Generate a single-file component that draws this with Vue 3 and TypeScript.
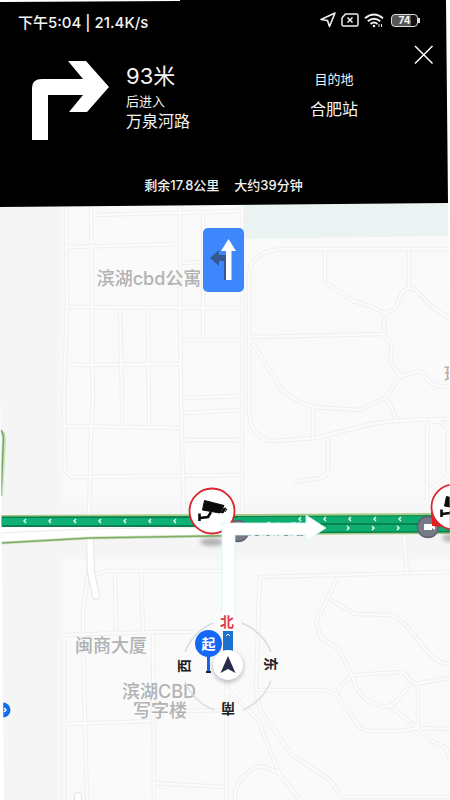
<script setup lang="ts">
import { ref } from 'vue'

interface Chevron {
  x: number
  y: number
  dir: 1 | -1
}

interface PlaceLabel {
  text: string
  x: number
  y: number
}

const navigating = ref(true)

const westbound: Chevron[] = [0, 25, 50, 75, 100, 125, 150, 175].map((x) => ({ x, y: 521, dir: -1 }))
const oppositeLane: Chevron[] = [300, 325, 350, 375, 400].map((x) => ({ x, y: 519, dir: -1 }))
const ownLane: Chevron[] = [348, 373, 398].map((x) => ({ x, y: 528, dir: 1 }))
const chevrons: Chevron[] = [...westbound, ...oppositeLane, ...ownLane]

const labels: PlaceLabel[] = [
  { text: '滨湖cbd公寓', x: 149, y: 285 },
  { text: '闽商大厦', x: 111, y: 652 },
  { text: '滨湖CBD', x: 159, y: 698 },
  { text: '写字楼', x: 160, y: 717 },
  { text: '环', x: 453, y: 381 },
]

const streets: string[] = [
  'M66 200L67 300L64 400L65 470L71 477L242 475',
  'M91 200L92 300L92 350L93 400L91 430L90 480L89 515',
  'M180 200V300L181 400L183 480L184 515',
  'M203 213V338',
  'M92 215L242 211',
  'M67 247L180 244',
  'M181 263L203 262',
  'M68 307L242 308',
  'M67 361L76 365L180 364',
  'M182 340H242',
  'M183 398L242 396',
  'M120 308L122 400V426',
  'M148 308L149 426',
  'M65 426L182 428',
  'M184 413L242 410',
  'M185 440H242',
  'M242 200V515',
  'M450 249H285Q250 250 249 275V410Q250 441 275 441L315 438L372 424Q400 419 450 419',
  'M325 250V282L353 301L370 306L384 313L395 309L403 291Q411 286 417 291L432 307L450 319',
  'M409 250V288',
  'M384 313V334L392 345L390 362L401 376L418 371Q424 372 428 380Q433 387 450 387',
  'M250 337L384 334',
  'M250 339L282 390L297 401L314 407L360 410L385 398L401 376',
  'M387 398L397 421',
  'M313 407V438',
  'M328 438V468Q328 476 320 478L292 482',
  'M427 500V430Q427 420 437 421Q447 424 448 430V475L430 490',
  'M404 535L407 573',
  'M258 620L260 577L450 572',
  'M338 577L316 622L321 638L339 649L352 675L403 672L414 684L450 678',
  'M259 600L256 690L260 710L292 755L330 780L341 797H450',
  'M256 690H325L337 695L360 728Q366 731 372 731H402L418 728L450 729',
  'M331 600L355 614L390 615Q400 618 410 630L430 655Q440 664 450 664',
  'M337 695L340 687L352 675L356 688L366 700L383 707Q393 706 398 700L410 684',
  'M390 706L418 728L430 740L446 748L450 760',
  'M418 684V728',
  'M228 690L258 720L280 775',
  'M235 800Q233 780 258 766Q275 768 283 778L300 800',
  'M227 680L226 800',
  'M64 635V800',
  'M64 635L153 632H224',
  'M90 560L83 610V635L85 723L87 800',
  'M115 572L116 632',
  'M141 572L143 632',
  'M95 574L107 571H225',
  'M153 635L154 800',
  'M65 724L153 721',
  'M185 711L225 710',
  'M154 783L224 787',
]
</script>

<template>
  <main class="nav-screen">
    <header class="panel">
      <div class="status">
        <span class="clock">下午5:04 | 21.4K/s</span>
        <div class="status-icons">
          <svg width="16" height="16" viewBox="0 0 16 16" fill="none" stroke="#eee" stroke-width="1.6" stroke-linejoin="round">
            <path d="M1 7.500L15 1L9.500 14.500L7.500 8.500Z" />
          </svg>
          <svg width="18" height="14" viewBox="0 0 18 14" fill="none" stroke="#eee" stroke-width="1.500" stroke-linejoin="round">
            <path d="M4.500 1H15.500Q17 1 17 2.500V11.500Q17 13 15.500 13H2.500Q1 13 1 11.500V5Z" />
            <path d="M6.500 4.500L11.500 9.500M11.500 4.500L6.500 9.500" />
          </svg>
          <svg width="20" height="15" viewBox="0 0 20 15" fill="none" stroke="#eee" stroke-width="1.900">
            <path d="M1 5.200Q10 -2.200 19 5.200M3.800 8.300Q10 3 16.200 8.300M6.500 11Q10 8 13.500 11" />
            <circle cx="10" cy="13" r="1.300" fill="#eee" stroke="none" />
            <path d="M15 11V14M17.500 11V14" stroke-width="1" />
          </svg>
          <span class="battery">74</span>
        </div>
      </div>

      <div class="guidance">
        <svg class="turn" viewBox="0 0 79 80" aria-hidden="true">
          <path d="M1 79V27Q1 18 11 18H52L37 0H55L78 26L56 51H38L52 34H17V79Z" fill="#fff" />
        </svg>
        <div class="next">
          <strong class="distance">93米</strong>
          <span class="hint">后进入</span>
          <span class="road">万泉河路</span>
        </div>
        <div class="destination">
          <span class="hint">目的地</span>
          <span class="road">合肥站</span>
        </div>
        <button class="close" type="button" aria-label="关闭" @click="navigating = false">
          <svg width="20" height="20" viewBox="0 0 20 20" stroke="#fff" stroke-width="1.500">
            <path d="M1 1L18.500 18.500M18.500 1L1 18.500" />
          </svg>
        </button>
      </div>

      <p class="summary"><span>剩余17.8公里</span><span>大约39分钟</span></p>
    </header>

    <section class="map" aria-label="地图">
      <svg class="canvas" viewBox="0 200 450 600" preserveAspectRatio="xMidYMin slice">
        <defs>
          <linearGradient id="suburb" x1="0" x2="1" y1="0" y2="0">
            <stop offset="0.850" stop-color="#f5f5f5" />
            <stop offset="1" stop-color="#f9f9f9" />
          </linearGradient>
          <linearGradient id="verge" x1="0" x2="0" y1="0" y2="1">
            <stop offset="0" stop-color="#f5f5f5" stop-opacity="0" />
            <stop offset="0.300" stop-color="#f5f5f5" />
            <stop offset="0.800" stop-color="#f5f5f5" />
            <stop offset="1" stop-color="#f5f5f5" stop-opacity="0" />
          </linearGradient>
          <linearGradient id="road-name" x1="0" x2="0" y1="0" y2="1">
            <stop offset="0.550" stop-color="#fff" />
            <stop offset="0.600" stop-color="#46534e" />
          </linearGradient>
          <filter id="soft" x="-50%" y="-100%" width="200%" height="300%">
            <feGaussianBlur stdDeviation="2" />
          </filter>
          <g id="camera">
            <ellipse cx="0" cy="31" rx="12" ry="4" fill="#000" opacity="0.280" filter="url(#soft)" />
            <circle r="22.500" fill="#fff" stroke="#d9272d" stroke-width="1.800" />
            <path d="M-7.500 -10.500L12 -5.500L8 2L-9.500 -1Z" fill="#0b0b0b" stroke="#0b0b0b" stroke-linejoin="round" />
            <path d="M-1 1L-4 6L-12 7M-12.500 2.500V10" fill="none" stroke="#0b0b0b" stroke-width="2.600" />
            <path d="M9 1.500L11.500 -2.500L14 -3L11 2ZM13 1L15 -2" fill="#0b0b0b" stroke="#0b0b0b" />
          </g>
        </defs>

        <rect y="200" width="450" height="600" fill="#fafafa" />
        <rect y="200" width="66" height="600" fill="url(#suburb)" />
        <rect y="495" width="450" height="70" fill="url(#verge)" />
        <path d="M244 200H450V236L244 239Z" fill="#eaf3f2" />

        <g fill="none" stroke="#efeff0" stroke-width="4.500" stroke-linejoin="round">
          <path v-for="d in streets" :key="d" :d="d" />
        </g>
        <g fill="none" stroke="#fbfbfb" stroke-width="2.500" stroke-linejoin="round">
          <path v-for="d in streets" :key="d" :d="d" />
        </g>
        <g fill="none" stroke-linecap="round">
          <path d="M90 538L91 572L96 596M78 796V810" stroke="#e6e6e7" stroke-width="8" />
          <path d="M90 538L91 572L96 596M78 796V810" stroke="#fff" stroke-width="6" />
        </g>

        <g class="place">
          <text v-for="label in labels" :key="label.text" :x="label.x" :y="label.y">{{ label.text }}</text>
        </g>

        <path d="M0 527H240V536L90 539L0 544Z" fill="#fff" />
        <path d="M0 533L90 529L240 527" fill="none" stroke="#ececec" />
        <path d="M0 543L90 538L240 535.500" fill="none" stroke="#cbe0c0" stroke-width="3" />
        <path d="M0 543L90 538L240 535.500" fill="none" stroke="#7fae68" stroke-width="1.500" />
        <path d="M0 431Q4 432 4 439L1 496" fill="none" stroke="#cbe3bd" stroke-width="4" />
        <path d="M0 430Q3.500 432 3.500 439L1 496" fill="none" stroke="#6fae60" stroke-width="1.500" />

        <path d="M0 515L240 514L450 513V534L240 535V527H0Z" fill="#a3cb86" />
        <path d="M0 516.500L240 516L450 515V532.500L240 533.500V527H0Z" fill="#06814f" />
        <path d="M0 518H240V525H0Z" fill="#0fb077" />
        <path d="M238 517L450 516V523H238ZM238 525H450V531L238 532Z" fill="#0fac70" />
        <g fill="none" stroke="#e9fff4" stroke-width="1.400">
          <path
            v-for="c in chevrons"
            :key="`${c.x}-${c.y}`"
            d="M-1 -2L1 0L-1 2"
            :transform="`translate(${c.x} ${c.y}) scale(${c.dir} 1)`"
          />
        </g>

        <g fill="#777b88" stroke="#5d6170" stroke-width="1.500">
          <circle cx="238" cy="531" r="10.500" />
          <circle cx="428" cy="527" r="10.500" />
        </g>
        <path d="M424 524H432V530H424ZM432 526L435 524V530L432 528Z" fill="#fff" />
        <path d="M431 511L432 526L446 527ZM233 514V524H224Z" fill="#e3211f" />
        <text class="road-name" x="276" y="534">万泉河路</text>
        <use href="#camera" x="212" y="511" />
        <use href="#camera" x="454" y="507" />

        <path
          d="M222 616V523H306V515L326 528L306 541V535H235V616Z"
          fill="#fff"
          stroke="#cdf5f5"
          stroke-width="0.800"
        />

        <rect x="203" y="228" width="41" height="64" rx="5" fill="#3d86fb" />
        <path d="M210 258L219 250V255H227V280H224V261H219V266Z" fill="#34588f" />
        <path d="M228.500 239L236 251H231.500V280H226V251H221Z" fill="#fff" />

        <g fill="none" stroke="#d6dde5" stroke-width="1.500">
          <path d="M242 623Q263 632 271 652M271 681Q263 701 243 710M214 710Q194 702 185 682M185 652Q193 632 213 623" />
        </g>
        <circle cx="227" cy="622" r="10" fill="#fff" opacity="0.900" />
        <rect x="223" y="631" width="10" height="24" fill="#1b72d0" />
        <path d="M226 636L228 634L230 636" fill="none" stroke="#fff" />
        <g class="compass">
          <text class="north" x="227" y="627">北</text>
          <text transform="translate(184 666) rotate(-90)" y="5">西</text>
          <text transform="translate(271 664) rotate(90)" y="5">东</text>
          <text transform="translate(228 709) rotate(180)" y="5">南</text>
        </g>
        <circle cx="228" cy="667" r="16" fill="#4a5568" opacity="0.300" filter="url(#soft)" />
        <path d="M208.500 655V672" stroke="#1264e8" stroke-width="3" />
        <path d="M206 672H211" stroke="#10233f" stroke-width="2" />
        <circle cx="208.500" cy="643.500" r="13.500" fill="#1468f5" />
        <text class="origin" x="208.500" y="649">起</text>
        <circle cx="228" cy="665" r="15" fill="#fff" />
        <path d="M228 656L235.500 673L228 669L220.500 673Z" fill="#292c48" />

        <circle cx="3" cy="710" r="7.500" fill="#0e6ef0" />
        <path d="M4 708L6 710L4 712" fill="none" stroke="#fff" stroke-width="1.500" />
      </svg>
    </section>
  </main>
</template>

<style>
body {
  margin: 0;
  background: #fff;
}
</style>

<style scoped>
.nav-screen {
  display: flex;
  flex-direction: column;
  min-height: 100vh;
  overflow: hidden;
  font-family: Inter, "Noto Sans CJK SC", sans-serif;
}

.panel {
  position: relative;
  z-index: 1;
  box-sizing: border-box;
  padding: 12px 16px 12px 18px;
  background: #000;
  color: #f4f4f4;
  clip-path: polygon(0 2px, 40% 1px, 40% 0, calc(100% - 4px) 0, calc(100% - 2px) 203px, 0 100%);
}

.status {
  display: flex;
  align-items: center;
  justify-content: space-between;
  height: 22px;
  padding-right: 16px;
}

.clock {
  font-size: 15px;
  font-weight: 500;
  line-height: 22px;
  white-space: nowrap;
}

.status-icons {
  display: flex;
  align-items: center;
  gap: 5px;
  margin-bottom: 6px;
}

.battery {
  position: relative;
  box-sizing: border-box;
  width: 27px;
  height: 13px;
  margin-left: 2px;
  border: 1px solid #ddd;
  border-radius: 4px;
  background: linear-gradient(90deg, #555 74%, #111 74%);
  font-size: 10px;
  font-weight: 700;
  line-height: 11px;
  text-align: center;
}

.battery::after {
  content: "";
  position: absolute;
  top: 3px;
  right: -3px;
  width: 2px;
  height: 5px;
  background: #ddd;
}

.guidance {
  display: grid;
  grid-template-columns: 79px 1fr 1fr 20px;
  column-gap: 16px;
  margin-top: 11px;
  padding-left: 13px;
}

.turn {
  width: 79px;
  height: 80px;
  margin-top: 16px;
}

.next,
.destination {
  display: flex;
  flex-direction: column;
}

.next {
  padding-top: 16px;
}

.destination {
  align-items: center;
  gap: 10px;
  padding-top: 24px;
}

.distance {
  font-size: 22px;
  font-weight: 400;
  line-height: 30px;
}

.hint {
  font-size: 13px;
  line-height: 20px;
}

.road {
  font-size: 16px;
  line-height: 20px;
}

.close {
  align-self: start;
  padding: 0;
  border: 0;
  background: none;
  line-height: 0;
  cursor: pointer;
}

.summary {
  display: flex;
  justify-content: center;
  gap: 15px;
  margin: 34px 5px 0 0;
  font-size: 13px;
  font-weight: 500;
  line-height: 20px;
}

.map {
  flex: 1;
  display: flex;
  margin-top: -7px;
  clip-path: polygon(0 0, calc(100% - 2px) 0, 100% 60%, 100% 100%, 4px 100%, 3px 80%, 1px 40%, 0 30%);
}

.canvas {
  display: block;
  width: 100%;
  height: auto;
}

.place {
  fill: #b0b2b4;
  font-size: 18px;
  font-weight: 500;
  text-anchor: middle;
}

.road-name {
  fill: url(#road-name);
  font-size: 14px;
  font-weight: 700;
  text-anchor: middle;
}

.compass {
  fill: #222;
  font-size: 14px;
  font-weight: 700;
  text-anchor: middle;
}

.north {
  fill: #e23a44;
}

.origin {
  fill: #fff;
  font-size: 14px;
  font-weight: 700;
  text-anchor: middle;
}
</style>
